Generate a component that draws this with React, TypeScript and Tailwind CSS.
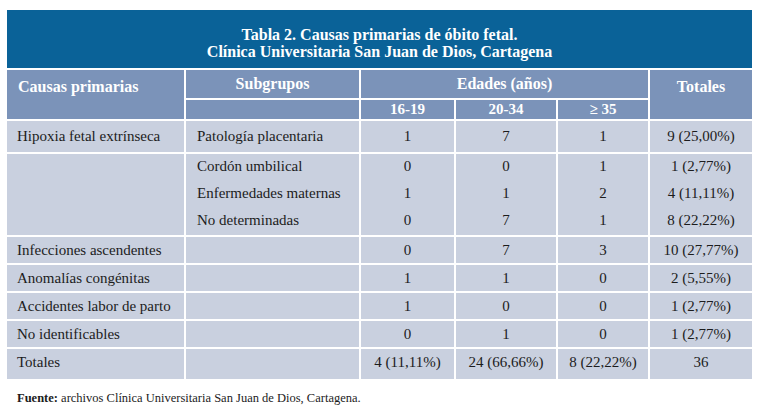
import React from 'react';

const serif = { fontFamily: '"Liberation Serif", "DejaVu Serif", serif' };

type Row = { causa: string; sub: string[]; a: string[]; b: string[]; c: string[]; t: string[]; h: string };

const rows: Row[] = [
  { causa: 'Hipoxia fetal extrínseca', sub: ['Patología placentaria'], a: ['1'], b: ['7'], c: ['1'], t: ['9 (25,00%)'], h: 'h-[31px]' },
  {
    causa: '',
    sub: ['Cordón umbilical', 'Enfermedades maternas', 'No determinadas'],
    a: ['0', '1', '0'],
    b: ['0', '1', '7'],
    c: ['1', '2', '1'],
    t: ['1 (2,77%)', '4 (11,11%)', '8 (22,22%)'],
    h: 'h-[81px] pb-[2px]',
  },
  { causa: 'Infecciones ascendentes', sub: [''], a: ['0'], b: ['7'], c: ['3'], t: ['10 (27,77%)'], h: 'h-[26px]' },
  { causa: 'Anomalías congénitas', sub: [''], a: ['1'], b: ['1'], c: ['0'], t: ['2 (5,55%)'], h: 'h-[26px]' },
  { causa: 'Accidentes labor de parto', sub: [''], a: ['1'], b: ['0'], c: ['0'], t: ['1 (2,77%)'], h: 'h-[26px]' },
  { causa: 'No identificables', sub: [''], a: ['0'], b: ['1'], c: ['0'], t: ['1 (2,77%)'], h: 'h-[26px]' },
  { causa: 'Totales', sub: [''], a: ['4 (11,11%)'], b: ['24 (66,66%)'], c: ['8 (22,22%)'], t: ['36'], h: 'h-[30px] pb-[4px]' },
];

const Lines = ({ items, center }: { items: string[]; center?: boolean }) => (
  <div className={`flex flex-col ${center ? 'items-center' : 'items-start'}`}>
    {items.map((s, i) => (
      <div key={i} className="h-[27px] leading-[27px] whitespace-nowrap">
        {s}
      </div>
    ))}
  </div>
);

export default function App() {
  return (
    <div className="w-[770px] h-[415px] bg-white text-[#1c1c1c]" style={serif}>
      <div className="pt-[10px] pl-[7px]">
        <div className="grid grid-cols-[177px_173px_93px_100px_90px_102px] gap-[2px] w-[745px]">
          <div className="col-span-6 h-[58px] bg-[#0a6298] text-white font-bold text-[16px] leading-[17px] pt-[8px] flex flex-col items-center justify-center">
            <div>Tabla 2. Causas primarias de óbito fetal.</div>
            <div>Clínica Universitaria San Juan de Dios, Cartagena</div>
          </div>

          <div className="row-span-2 bg-[#7b93b9] text-white font-bold text-[16px] pl-[11px] pt-[5px]">Causas primarias</div>
          <div className="h-[28px] bg-[#7b93b9] text-white font-bold text-[16px] flex items-center justify-center">Subgrupos</div>
          <div className="col-span-3 h-[28px] bg-[#7b93b9] text-white font-bold text-[16px] flex items-center justify-center">Edades (años)</div>
          <div className="row-span-2 bg-[#7b93b9] text-white font-bold text-[16px] text-center pt-[5px]">Totales</div>

          <div className="h-[19px] bg-[#7b93b9]" />
          <div className="h-[19px] bg-[#7b93b9] text-white font-bold text-[15px] flex items-center justify-center">16-19</div>
          <div className="h-[19px] bg-[#7b93b9] text-white font-bold text-[15px] flex items-center justify-center">20-34</div>
          <div className="h-[19px] bg-[#7b93b9] text-white font-bold text-[15px] flex items-center justify-center">≥ 35</div>

          {rows.map((r, i) => (
            <React.Fragment key={i}>
              <div className={`${r.h} bg-[#c9d0df] text-[15px] pl-[10px] flex items-center`}>
                <span className="whitespace-nowrap">{r.causa}</span>
              </div>
              <div className={`${r.h} bg-[#c9d0df] text-[15px] pl-[11px] flex items-center`}>
                <Lines items={r.sub} />
              </div>
              <div className={`${r.h} bg-[#c9d0df] text-[15px] flex items-center justify-center`}>
                <Lines items={r.a} center />
              </div>
              <div className={`${r.h} bg-[#c9d0df] text-[15px] flex items-center justify-center`}>
                <Lines items={r.b} center />
              </div>
              <div className={`${r.h} bg-[#c9d0df] text-[15px] flex items-center justify-center`}>
                <Lines items={r.c} center />
              </div>
              <div className={`${r.h} bg-[#c9d0df] text-[15px] flex items-center justify-center`}>
                <Lines items={r.t} center />
              </div>
            </React.Fragment>
          ))}
        </div>
        <p className="mt-[12px] pl-[10px] text-[12.5px] leading-[15px]">
          <span className="font-bold">Fuente:</span> archivos Clínica Universitaria San Juan de Dios, Cartagena.
        </p>
      </div>
    </div>
  );
}
